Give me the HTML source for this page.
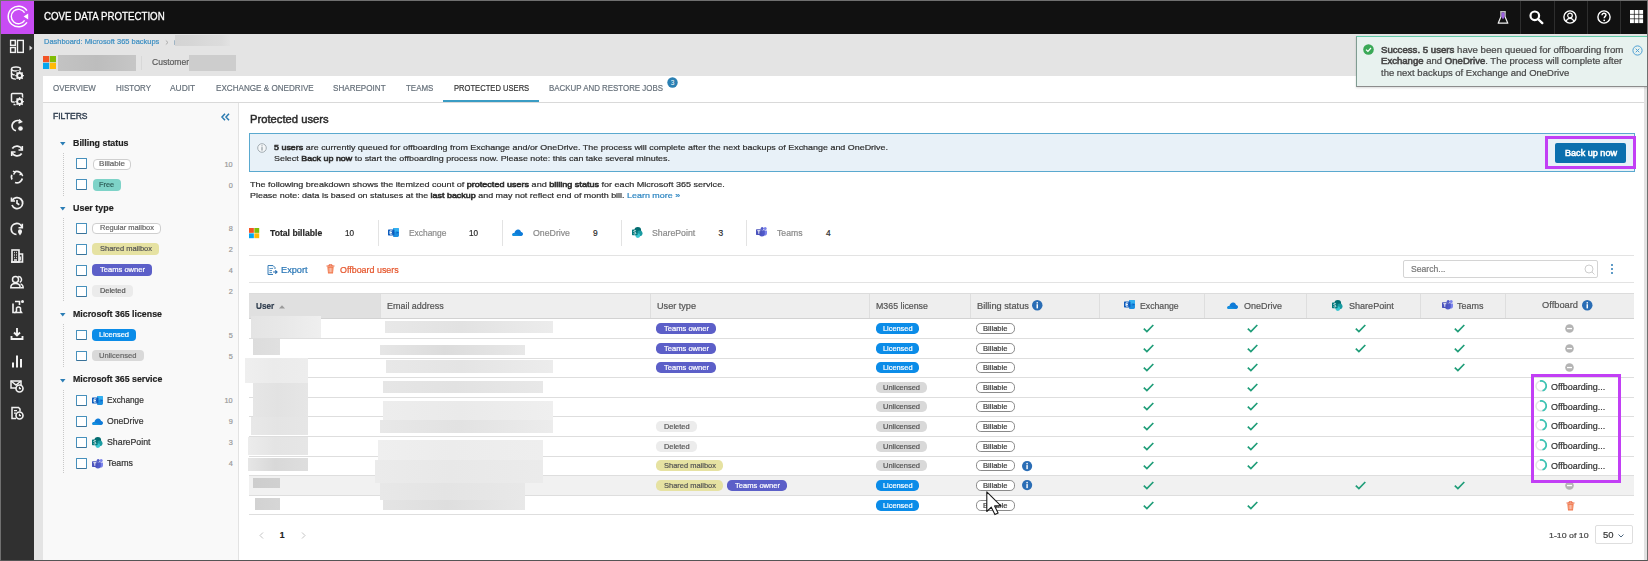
<!DOCTYPE html>
<html><head><meta charset="utf-8">
<style>
*{box-sizing:border-box;margin:0;padding:0}
html,body{width:1648px;height:561px;overflow:hidden;background:#fff}
body{position:relative;font-family:"Liberation Sans",sans-serif;color:#333}
.a{position:absolute}
.t{position:absolute;white-space:nowrap;line-height:1;-webkit-text-stroke:0.2px currentColor}
.t b{font-weight:normal;-webkit-text-stroke:0.55px currentColor}
svg{position:absolute;overflow:visible}
</style></head>
<body>
<div class="a" style="left:34px;top:34px;width:1614px;height:527px;background:#e4e4e4"></div>
<div class="a" style="left:0px;top:0px;width:1648px;height:34px;background:#111"></div>
<div class="a" style="left:1px;top:1px;width:33px;height:33px;background:#c84cf4"></div>
<div class="a" style="left:0px;top:34px;width:34px;height:527px;background:#303030"></div>
<div class="a" style="left:43px;top:76px;width:1601px;height:27px;background:#fff;border-bottom:1px solid #d9d9d9"></div>
<div class="a" style="left:43px;top:103px;width:196px;height:457px;background:#f9f9f9;border-right:1px solid #e3e3e3"></div>
<div class="a" style="left:239px;top:103px;width:1405px;height:457px;background:#fff"></div>
<div class="a" style="left:1644px;top:34px;width:3px;height:527px;background:#e2e2e2"></div>
<div class="t" style="left:43.50px;top:11px;font-size:11px;color:#fff;transform:scaleX(0.8842);transform-origin:0 0;-webkit-text-stroke:0.3px #fff;">COVE DATA PROTECTION</div>
<svg style="left:1.6px;top:1.3px" width="33" height="33" viewBox="0 0 33 33">
<path d="M24.94 9.59 A10.3 10.3 0 1 0 24.94 21.41" fill="none" stroke="#fff" stroke-width="1.5"/>
<path d="M22.6 11.68 A7.2 7.2 0 1 0 22.6 19.32" fill="none" stroke="#fff" stroke-width="1.4"/>
<path d="M21.6 15.6 L26.2 12.6 L26.2 18.4 Z" fill="#fff"/>
</svg>
<div class="a" style="left:1519.5px;top:1px;width:1px;height:33px;background:#2e2e2e"></div>
<div class="a" style="left:1553.5px;top:1px;width:1px;height:33px;background:#2e2e2e"></div>
<div class="a" style="left:1586.5px;top:1px;width:1px;height:33px;background:#2e2e2e"></div>
<div class="a" style="left:1620px;top:1px;width:1px;height:33px;background:#2e2e2e"></div>
<svg style="left:1497px;top:11px" width="12" height="14" viewBox="0 0 12 14">
<path d="M4 1.3 V5.5 L1.2 12.2 H10.8 L8 5.5 V1.3" fill="none" stroke="#f0f0f0" stroke-width="1.2" stroke-linejoin="round"/>
<path d="M3.2 0.8 H8.8" stroke="#f0f0f0" stroke-width="1.2"/>
<path d="M4.5 1.5 H7.5 V6 L6 8.5 L4.5 6Z" fill="#9b5fe0"/>
</svg>
<svg style="left:1529px;top:10px" width="15" height="14" viewBox="0 0 15 14">
<circle cx="5.8" cy="5.8" r="4.3" fill="none" stroke="#fff" stroke-width="2.2"/>
<path d="M9 9 L13.3 13.1" stroke="#fff" stroke-width="2.4" stroke-linecap="round"/>
</svg>
<svg style="left:1563px;top:10px" width="14" height="14" viewBox="0 0 14 14">
<circle cx="7" cy="7" r="6.1" fill="none" stroke="#fff" stroke-width="1.4"/>
<circle cx="7" cy="5.5" r="2.3" fill="none" stroke="#fff" stroke-width="1.2"/>
<path d="M3.2 11.6 C3.8 9 5 8.3 7 8.3 C9 8.3 10.2 9 10.8 11.6" fill="none" stroke="#fff" stroke-width="1.2"/>
</svg>
<svg style="left:1597px;top:10px" width="14" height="14" viewBox="0 0 14 14">
<circle cx="7" cy="7" r="6.1" fill="none" stroke="#fff" stroke-width="1.4"/>
<path d="M5 5.3 C5 3.8 6 3.2 7 3.2 C8.2 3.2 9 4 9 5 C9 6.3 7.2 6.5 7.2 8.2" fill="none" stroke="#fff" stroke-width="1.4"/>
<circle cx="7.2" cy="10.3" r="0.9" fill="#fff"/>
</svg>
<svg style="left:1630px;top:9.8px" width="14" height="14" viewBox="0 0 14 14"><rect x="0.0" y="0.0" width="3.9" height="3.9" fill="#fff"/><rect x="0.0" y="4.6" width="3.9" height="3.9" fill="#fff"/><rect x="0.0" y="9.2" width="3.9" height="3.9" fill="#fff"/><rect x="4.6" y="0.0" width="3.9" height="3.9" fill="#fff"/><rect x="4.6" y="4.6" width="3.9" height="3.9" fill="#fff"/><rect x="4.6" y="9.2" width="3.9" height="3.9" fill="#fff"/><rect x="9.2" y="0.0" width="3.9" height="3.9" fill="#fff"/><rect x="9.2" y="4.6" width="3.9" height="3.9" fill="#fff"/><rect x="9.2" y="9.2" width="3.9" height="3.9" fill="#fff"/></svg>
<svg style="left:10px;top:39px" width="14" height="14" viewBox="0 0 14 14"><rect x="0.6" y="1.4" width="4.7" height="4.9" fill="none" stroke="#f2f2f2" stroke-width="1.4"/><rect x="0.6" y="8.5" width="4.7" height="4.9" fill="none" stroke="#f2f2f2" stroke-width="1.4"/><rect x="7.5" y="1.4" width="5.8" height="12" fill="none" stroke="#f2f2f2" stroke-width="1.4"/></svg>
<svg style="left:10px;top:65.5px" width="14" height="14" viewBox="0 0 14 14"><ellipse cx="6" cy="3" rx="4.5" ry="2" fill="none" stroke="#f2f2f2" stroke-width="1.5"/><path d="M1.5 3 V11 C1.5 12.2 3.5 13 6 13" fill="none" stroke="#f2f2f2" stroke-width="1.5"/><path d="M1.5 7 C1.5 8.2 3.5 9 6 9" fill="none" stroke="#f2f2f2" stroke-width="1.5"/><circle cx="9.6" cy="9.6" r="5" fill="#303030"/><circle cx="9.6" cy="9.6" r="2.5" fill="none" stroke="#f2f2f2" stroke-width="2"/><path d="M12.50 9.60L13.90 9.60M11.65 11.65L12.64 12.64M9.60 12.50L9.60 13.90M7.55 11.65L6.56 12.64M6.70 9.60L5.30 9.60M7.55 7.55L6.56 6.56M9.60 6.70L9.60 5.30M11.65 7.55L12.64 6.56" stroke="#f2f2f2" stroke-width="1.4"/></svg>
<svg style="left:10px;top:92px" width="14" height="14" viewBox="0 0 14 14"><path d="M7 10 H2.5 A1 1 0 0 1 1.5 9 V2.5 A1 1 0 0 1 2.5 1.5 H11.5 A1 1 0 0 1 12.5 2.5 V6" fill="none" stroke="#f2f2f2" stroke-width="1.5"/><path d="M3.5 12.5 H6" stroke="#f2f2f2" stroke-width="1.5"/><circle cx="9.6" cy="9.6" r="5" fill="#303030"/><circle cx="9.6" cy="9.6" r="2.5" fill="none" stroke="#f2f2f2" stroke-width="2"/><path d="M12.50 9.60L13.90 9.60M11.65 11.65L12.64 12.64M9.60 12.50L9.60 13.90M7.55 11.65L6.56 12.64M6.70 9.60L5.30 9.60M7.55 7.55L6.56 6.56M9.60 6.70L9.60 5.30M11.65 7.55L12.64 6.56" stroke="#f2f2f2" stroke-width="1.4"/></svg>
<svg style="left:10px;top:118px" width="14" height="14" viewBox="0 0 14 14"><path d="M10.5 3.5 A5.5 5.5 0 0 0 2 8" fill="none" stroke="#f2f2f2" stroke-width="1.62"/><path d="M2 8 A5.5 5.5 0 0 0 6 12.8" fill="none" stroke="#f2f2f2" stroke-width="1.62"/><path d="M9 1.5 L11.5 3.8 L8.5 5" fill="none" stroke="#f2f2f2" stroke-width="1.50"/><circle cx="10.5" cy="10.5" r="2.3" fill="#f2f2f2"/></svg>
<svg style="left:10px;top:144px" width="14" height="14" viewBox="0 0 14 14"><path d="M12 5.5 A5.5 5.5 0 0 0 2.3 4.5" fill="none" stroke="#f2f2f2" stroke-width="1.75"/><path d="M2 8.5 A5.5 5.5 0 0 0 11.7 9.5" fill="none" stroke="#f2f2f2" stroke-width="1.75"/><path d="M12.3 2 V6 H8.5" fill="none" stroke="#f2f2f2" stroke-width="1.62"/><path d="M1.7 12 V8 H5.5" fill="none" stroke="#f2f2f2" stroke-width="1.62"/></svg>
<svg style="left:10px;top:170px" width="14" height="14" viewBox="0 0 14 14"><path d="M4 2.2 A5.5 5.5 0 0 1 11.8 4.5" fill="none" stroke="#f2f2f2" stroke-width="1.75"/><path d="M12.3 8.5 A5.5 5.5 0 0 1 5 12.5" fill="none" stroke="#f2f2f2" stroke-width="1.75"/><path d="M2 9.5 A5.5 5.5 0 0 1 1.8 4.8" fill="none" stroke="#f2f2f2" stroke-width="1.75"/><path d="M3 1 L5 2.5 L3.5 4.5 M12.8 6 L11.5 4 L9.5 5" fill="none" stroke="#f2f2f2" stroke-width="1.38"/></svg>
<svg style="left:10px;top:196px" width="14" height="14" viewBox="0 0 14 14"><path d="M2.3 4.5 A5.5 5.5 0 1 1 2 9" fill="none" stroke="#f2f2f2" stroke-width="1.75"/><path d="M1.5 1.5 V5 H5" fill="none" stroke="#f2f2f2" stroke-width="1.62"/><path d="M7 4 V7.3 L9.3 8.8" fill="none" stroke="#f2f2f2" stroke-width="1.62"/></svg>
<svg style="left:10px;top:222px" width="14" height="14" viewBox="0 0 14 14"><path d="M12 5.5 A5.5 5.5 0 1 0 6.5 12.5" fill="none" stroke="#f2f2f2" stroke-width="1.75"/><path d="M12.3 1.8 V5.8 H8.5" fill="none" stroke="#f2f2f2" stroke-width="1.62"/><path d="M10 13.5 C8 11 8 10 8 9.3 A2 2 0 0 1 12 9.3 C12 10 12 11 10 13.5Z" fill="#f2f2f2"/></svg>
<svg style="left:10px;top:248.5px" width="14" height="14" viewBox="0 0 14 14"><rect x="2" y="1" width="7" height="12" fill="none" stroke="#f2f2f2" stroke-width="1.62"/><path d="M9 5 H12.5 V13 H1" fill="none" stroke="#f2f2f2" stroke-width="1.62"/><path d="M4 3.5H4.8M6.2 3.5H7M4 6H4.8M6.2 6H7M4 8.5H4.8M6.2 8.5H7M4 11H7" stroke="#f2f2f2" stroke-width="1.50"/><path d="M10.2 7.5V11.5" stroke="#f2f2f2" stroke-width="1.38"/></svg>
<svg style="left:10px;top:274.5px" width="14" height="14" viewBox="0 0 14 14"><circle cx="5.5" cy="4.5" r="3" fill="none" stroke="#f2f2f2" stroke-width="1.5"/><path d="M0.8 12.8 C0.8 9.8 2.6 8.6 5.5 8.6 C8.4 8.6 10.2 9.8 10.2 12.8 Z" fill="none" stroke="#f2f2f2" stroke-width="1.5"/><path d="M8.2 1.6 A3 3 0 0 1 9.8 7.3 M10.6 8.8 C12.3 9.3 13.2 10.5 13.2 12.8 H11" fill="none" stroke="#f2f2f2" stroke-width="1.4"/></svg>
<svg style="left:10px;top:300px" width="14" height="14" viewBox="0 0 14 14"><path d="M5 1.5 H9.5 V5 M3 3.5 V12.5 H5.5" fill="none" stroke="#f2f2f2" stroke-width="1.62"/><path d="M5.5 12.5 H11.5 L10.5 11 V8 A2.5 2.5 0 0 0 6.5 8 V11 Z" fill="none" stroke="#f2f2f2" stroke-width="1.50"/><circle cx="12.5" cy="1.5" r="1.5" fill="#f2f2f2"/></svg>
<svg style="left:10px;top:327px" width="14" height="14" viewBox="0 0 14 14"><path d="M7 1 V8.5 M4 5.5 L7 8.5 L10 5.5" fill="none" stroke="#f2f2f2" stroke-width="1.88"/><path d="M1.5 9 V12 H12.5 V9" fill="none" stroke="#f2f2f2" stroke-width="1.88"/></svg>
<svg style="left:10px;top:353.5px" width="14" height="14" viewBox="0 0 14 14"><path d="M3 13.5V8.5M7 13.5V1.5M11 13.5V5" stroke="#f2f2f2" stroke-width="2"/></svg>
<svg style="left:10px;top:379px" width="14" height="14" viewBox="0 0 14 14"><rect x="1" y="2" width="10" height="7" fill="none" stroke="#f2f2f2" stroke-width="1.50"/><path d="M1 2 L6 6 L11 2" fill="none" stroke="#f2f2f2" stroke-width="1.50"/><circle cx="9.5" cy="9.5" r="3.5" fill="#303030" stroke="#f2f2f2" stroke-width="1.62"/><path d="M9.5 7.8V9.6H11" fill="none" stroke="#f2f2f2" stroke-width="1.25"/></svg>
<svg style="left:10px;top:405.5px" width="14" height="14" viewBox="0 0 14 14"><path d="M6 12.5 H2 V1.5 H8.5 L10 3 V5.5" fill="none" stroke="#f2f2f2" stroke-width="1.50"/><path d="M4 4.5H7M4 7H6" stroke="#f2f2f2" stroke-width="1.25"/><circle cx="9.5" cy="9.5" r="3.5" fill="#303030" stroke="#f2f2f2" stroke-width="1.62"/><path d="M9.5 7.8V9.6H11" fill="none" stroke="#f2f2f2" stroke-width="1.25"/></svg>
<svg style="left:28.8px;top:44.5px" width="4" height="6" viewBox="0 0 4 6"><path d="M0.5 0.5 L3.5 3 L0.5 5.5Z" fill="#ddd"/></svg>
<div class="t" style="left:43.50px;top:38px;font-size:7.7px;color:#3b8ec2;transform:scaleX(0.9706);transform-origin:0 0;">Dashboard: Microsoft 365 backups</div>
<svg style="left:164.5px;top:39.5px" width="4" height="5" viewBox="0 0 4 5"><path d="M0.8 0.5 L3 2.5 L0.8 4.5" fill="none" stroke="#a0a0a0" stroke-width="0.8"/></svg>
<div class="a" style="left:175.2px;top:35.1px;width:55px;height:10.7px;background:linear-gradient(90deg,#d4d4d4,#d6d6d6 30%,#dadada 60%,#dcdcdc 85%,#e2e2e2)"></div>
<div class="a" style="left:173.5px;top:39.5px;width:1px;height:5px;background:#9fb4c4;border-radius:1px"></div>
<svg style="left:43px;top:56px" width="13" height="13" viewBox="0 0 13 13"><rect x="0" y="0" width="6.2" height="6.2" fill="#f35325"/><rect x="6.8" y="0" width="6.2" height="6.2" fill="#81bc06"/><rect x="0" y="6.8" width="6.2" height="6.2" fill="#05a6f0"/><rect x="6.8" y="6.8" width="6.2" height="6.2" fill="#ffba08"/></svg>
<div class="a" style="left:58px;top:55px;width:78px;height:15.5px;background:linear-gradient(90deg,#c3c3c3,#bdbdbd 50%,#c6c6c6);filter:blur(0.5px)"></div>
<div class="a" style="left:141px;top:56px;width:1px;height:14px;background:#d8d8d8"></div>
<div class="t" style="left:151.50px;top:58px;font-size:8.8px;color:#5a5a5a;transform:scaleX(0.9701);transform-origin:0 0;">Customer</div>
<div class="a" style="left:188.5px;top:55px;width:47.5px;height:15.5px;background:#cdcdcd;filter:blur(0.5px)"></div>
<div class="t" style="left:53.00px;top:83px;font-size:9.4px;color:#66707a;transform:scaleX(0.8499);transform-origin:0 0;">OVERVIEW</div>
<div class="t" style="left:115.80px;top:83px;font-size:9.4px;color:#66707a;transform:scaleX(0.8466);transform-origin:0 0;">HISTORY</div>
<div class="t" style="left:170.40px;top:83px;font-size:9.4px;color:#66707a;transform:scaleX(0.8960);transform-origin:0 0;">AUDIT</div>
<div class="t" style="left:216.00px;top:83px;font-size:9.4px;color:#66707a;transform:scaleX(0.8642);transform-origin:0 0;">EXCHANGE &amp; ONEDRIVE</div>
<div class="t" style="left:333.40px;top:83px;font-size:9.4px;color:#66707a;transform:scaleX(0.8630);transform-origin:0 0;">SHAREPOINT</div>
<div class="t" style="left:406.00px;top:83px;font-size:9.4px;color:#66707a;transform:scaleX(0.8453);transform-origin:0 0;">TEAMS</div>
<div class="t" style="left:453.90px;top:83px;font-size:9.4px;color:#333;transform:scaleX(0.8109);transform-origin:0 0;">PROTECTED USERS</div>
<div class="t" style="left:549.30px;top:83px;font-size:9.4px;color:#66707a;transform:scaleX(0.8438);transform-origin:0 0;">BACKUP AND RESTORE JOBS</div>
<div class="a" style="left:443px;top:100px;width:96px;height:2px;background:#3a9cc4"></div>
<svg style="left:666.5px;top:76.5px" width="11" height="11" viewBox="0 0 11 11"><circle cx="5.5" cy="5.5" r="5.2" fill="#2b80b3"/><text x="5.5" y="7.8" font-size="6.5" fill="#fff" text-anchor="middle" font-family="Liberation Sans">3</text></svg>
<div class="t" style="left:53.30px;top:112px;font-size:9px;color:#2f3d4e;transform:scaleX(0.9493);transform-origin:0 0;-webkit-text-stroke:0.4px #2f3d4e;">FILTERS</div>
<svg style="left:220.5px;top:112.5px" width="9" height="8" viewBox="0 0 9 8"><path d="M4 0.8 L1 4 L4 7.2 M8 0.8 L5 4 L8 7.2" fill="none" stroke="#2a7ab0" stroke-width="1.5"/></svg>
<svg style="left:59.8px;top:142px" width="6" height="4" viewBox="0 0 6 4"><path d="M0 0 H5.5 L2.75 3.5Z" fill="#2b7db5"/></svg>
<div class="t" style="left:72.50px;top:138px;font-size:9.6px;color:#222;font-weight:bold;transform:scaleX(0.9214);transform-origin:0 0;">Billing status</div>
<div class="a" style="left:62.5px;top:153px;width:1px;height:44px;background-image:linear-gradient(#c8c8c8 50%,transparent 50%);background-size:1px 2px"></div>
<div class="a" style="left:76px;top:158.2px;width:10.9px;height:10.6px;border:1.2px solid #4690bc;border-bottom-color:#3a7298;background:#fff;border-radius:1px"></div>
<div class="a" style="left:92.5px;top:158.5px;width:38px;height:11px;background:#fff;border-radius:4px;border:1px solid #cfcfcf;"></div>
<div class="t" style="left:98.50px;top:160px;font-size:7.3px;color:#666;transform:scaleX(1.1049);transform-origin:0 0;">Billable</div>
<div class="t" style="left:224.57px;top:161px;font-size:7.3px;color:#9a9a9a;">10</div>
<div class="a" style="left:76px;top:179.4px;width:10.9px;height:10.6px;border:1.2px solid #4690bc;border-bottom-color:#3a7298;background:#fff;border-radius:1px"></div>
<div class="a" style="left:92.5px;top:179px;width:28.5px;height:11.5px;background:#7ed3c8;border-radius:4px;"></div>
<div class="t" style="left:99.25px;top:181px;font-size:7.3px;color:#2d5d58;transform:scaleX(0.9990);transform-origin:0 0;">Free</div>
<div class="t" style="left:228.64px;top:182px;font-size:7.3px;color:#9a9a9a;">0</div>
<svg style="left:59.8px;top:206.8px" width="6" height="4" viewBox="0 0 6 4"><path d="M0 0 H5.5 L2.75 3.5Z" fill="#2b7db5"/></svg>
<div class="t" style="left:72.50px;top:203px;font-size:9.6px;color:#222;font-weight:bold;transform:scaleX(0.9283);transform-origin:0 0;">User type</div>
<div class="a" style="left:62.5px;top:218px;width:1px;height:84px;background-image:linear-gradient(#c8c8c8 50%,transparent 50%);background-size:1px 2px"></div>
<div class="a" style="left:76px;top:223px;width:10.9px;height:10.6px;border:1.2px solid #4690bc;border-bottom-color:#3a7298;background:#fff;border-radius:1px"></div>
<div class="a" style="left:92.2px;top:222.5px;width:68.6px;height:11.7px;background:#fff;border-radius:4px;border:1px solid #cfcfcf;"></div>
<div class="t" style="left:99.50px;top:224px;font-size:7.3px;color:#666;transform:scaleX(1.0240);transform-origin:0 0;">Regular mailbox</div>
<div class="t" style="left:228.64px;top:225px;font-size:7.3px;color:#9a9a9a;">8</div>
<div class="a" style="left:76px;top:244px;width:10.9px;height:10.6px;border:1.2px solid #4690bc;border-bottom-color:#3a7298;background:#fff;border-radius:1px"></div>
<div class="a" style="left:92.2px;top:243px;width:66.6px;height:11.8px;background:#e6e2a2;border-radius:4px;"></div>
<div class="t" style="left:99.50px;top:245px;font-size:7.3px;color:#555;transform:scaleX(1.0256);transform-origin:0 0;">Shared mailbox</div>
<div class="t" style="left:228.64px;top:246px;font-size:7.3px;color:#9a9a9a;">2</div>
<div class="a" style="left:76px;top:265px;width:10.9px;height:10.6px;border:1.2px solid #4690bc;border-bottom-color:#3a7298;background:#fff;border-radius:1px"></div>
<div class="a" style="left:92.2px;top:264px;width:59.8px;height:11.8px;background:#5c5fc8;border-radius:4px;"></div>
<div class="t" style="left:99.60px;top:266px;font-size:7.3px;color:#fff;transform:scaleX(1.0367);transform-origin:0 0;">Teams owner</div>
<div class="t" style="left:228.64px;top:267px;font-size:7.3px;color:#9a9a9a;">4</div>
<div class="a" style="left:76px;top:286px;width:10.9px;height:10.6px;border:1.2px solid #4690bc;border-bottom-color:#3a7298;background:#fff;border-radius:1px"></div>
<div class="a" style="left:92.2px;top:285.2px;width:41px;height:11.4px;background:#ebebeb;border-radius:4px;"></div>
<div class="t" style="left:99.95px;top:287px;font-size:7.3px;color:#555;transform:scaleX(1.0137);transform-origin:0 0;">Deleted</div>
<div class="t" style="left:228.64px;top:288px;font-size:7.3px;color:#9a9a9a;">2</div>
<svg style="left:59.8px;top:313px" width="6" height="4" viewBox="0 0 6 4"><path d="M0 0 H5.5 L2.75 3.5Z" fill="#2b7db5"/></svg>
<div class="t" style="left:72.50px;top:309px;font-size:9.6px;color:#222;font-weight:bold;transform:scaleX(0.9161);transform-origin:0 0;">Microsoft 365 license</div>
<div class="a" style="left:62.5px;top:324px;width:1px;height:43px;background-image:linear-gradient(#c8c8c8 50%,transparent 50%);background-size:1px 2px"></div>
<div class="a" style="left:76px;top:329.5px;width:10.9px;height:10.6px;border:1.2px solid #4690bc;border-bottom-color:#3a7298;background:#fff;border-radius:1px"></div>
<div class="a" style="left:91.8px;top:329.4px;width:44.5px;height:11.4px;background:#0b8ce8;border-radius:4px;"></div>
<div class="t" style="left:99.05px;top:331px;font-size:7.3px;color:#fff;transform:scaleX(1.0267);transform-origin:0 0;">Licensed</div>
<div class="t" style="left:228.64px;top:332px;font-size:7.3px;color:#9a9a9a;">5</div>
<div class="a" style="left:76px;top:350.5px;width:10.9px;height:10.6px;border:1.2px solid #4690bc;border-bottom-color:#3a7298;background:#fff;border-radius:1px"></div>
<div class="a" style="left:91.8px;top:350px;width:52.2px;height:11.2px;background:#d9d9d9;border-radius:4px;"></div>
<div class="t" style="left:99.15px;top:352px;font-size:7.3px;color:#666;transform:scaleX(1.0385);transform-origin:0 0;">Unlicensed</div>
<div class="t" style="left:228.64px;top:353px;font-size:7.3px;color:#9a9a9a;">5</div>
<svg style="left:59.8px;top:379px" width="6" height="4" viewBox="0 0 6 4"><path d="M0 0 H5.5 L2.75 3.5Z" fill="#2b7db5"/></svg>
<div class="t" style="left:72.50px;top:374px;font-size:9.6px;color:#222;font-weight:bold;transform:scaleX(0.9150);transform-origin:0 0;">Microsoft 365 service</div>
<div class="a" style="left:62.5px;top:390px;width:1px;height:83px;background-image:linear-gradient(#c8c8c8 50%,transparent 50%);background-size:1px 2px"></div>
<div class="a" style="left:76px;top:395px;width:10.9px;height:10.6px;border:1.2px solid #4690bc;border-bottom-color:#3a7298;background:#fff;border-radius:1px"></div>
<svg style="left:91.8px;top:396px" width="11" height="9" viewBox="0 0 11 9"><path d="M5.2 0 H9.6 A1.4 1.4 0 0 1 11 1.4 V7.6 A1.4 1.4 0 0 1 9.6 9 H5.2 Z" fill="#1c8fe0"/><path d="M5.2 0 H9.6 A1.4 1.4 0 0 1 11 1.4 V3.8 H5.2Z" fill="#32b0f0"/><path d="M8.5 3.2 L11 4.5 L8.5 5.8Z" fill="#0a64c8"/><rect x="0" y="1.6" width="6.4" height="5.8" rx="0.6" fill="#0b5bbd"/><path d="M2 2.9 H4.3 M2 2.9 V6.1 H4.3 M2 4.5 H4" fill="none" stroke="#fff" stroke-width="0.9"/></svg>
<div class="t" style="left:106.90px;top:396px;font-size:8.6px;color:#333;transform:scaleX(0.9625);transform-origin:0 0;">Exchange</div>
<div class="t" style="left:224.57px;top:397px;font-size:7.3px;color:#9a9a9a;">10</div>
<div class="a" style="left:76px;top:416px;width:10.9px;height:10.6px;border:1.2px solid #4690bc;border-bottom-color:#3a7298;background:#fff;border-radius:1px"></div>
<svg style="left:91.8px;top:418px" width="11" height="7" viewBox="0 0 11 7"><path d="M2.3 7 C0.6 7 0 5.9 0.4 4.9 C0.8 4 1.6 3.8 2.4 3.9 C2.9 1.6 4.6 0.3 6.3 0.5 C7.8 0.7 8.8 1.7 9.1 3.1 C10.4 3.2 11 4.1 11 5.1 C11 6.2 10.3 7 9.2 7 Z" fill="#0f7bd8"/><path d="M2.3 7 C0.6 7 0 5.9 0.4 4.9 C1 4.2 2 4.2 3 4.6 L9.2 7Z" fill="#1490df"/></svg>
<div class="t" style="left:106.90px;top:417px;font-size:8.6px;color:#333;transform:scaleX(1.0056);transform-origin:0 0;">OneDrive</div>
<div class="t" style="left:228.64px;top:418px;font-size:7.3px;color:#9a9a9a;">9</div>
<div class="a" style="left:76px;top:437px;width:10.9px;height:10.6px;border:1.2px solid #4690bc;border-bottom-color:#3a7298;background:#fff;border-radius:1px"></div>
<svg style="left:91.8px;top:437px" width="10.5" height="11" viewBox="0 0 10.5 11"><circle cx="5.8" cy="3.3" r="3.3" fill="#036c70"/><circle cx="7.6" cy="6.3" r="2.9" fill="#1a9ba1"/><circle cx="5.8" cy="8.6" r="2.4" fill="#37c6d0"/><rect x="0" y="2.6" width="5.6" height="5.6" rx="0.6" fill="#03787c"/><path d="M4 3.9 C3 3.3 1.6 3.6 1.8 4.5 C2 5.3 3.9 5.2 3.9 6.2 C3.9 7.1 2.4 7.2 1.6 6.7" fill="none" stroke="#fff" stroke-width="0.8"/></svg>
<div class="t" style="left:106.90px;top:438px;font-size:8.6px;color:#333;transform:scaleX(1.0228);transform-origin:0 0;">SharePoint</div>
<div class="t" style="left:228.64px;top:439px;font-size:7.3px;color:#9a9a9a;">3</div>
<div class="a" style="left:76px;top:458px;width:10.9px;height:10.6px;border:1.2px solid #4690bc;border-bottom-color:#3a7298;background:#fff;border-radius:1px"></div>
<svg style="left:91.8px;top:458.8px" width="11" height="9.5" viewBox="0 0 11 9.5"><circle cx="9.2" cy="1.6" r="1.5" fill="#7b83eb"/><path d="M7.3 3.6 H10.6 A0.4 0.4 0 0 1 11 4 V6.6 A2.1 2.1 0 0 1 6.8 6.6Z" fill="#7b83eb"/><circle cx="6.2" cy="1.5" r="1.5" fill="#5059c9"/><path d="M3.2 3.3 H8.4 A0.4 0.4 0 0 1 8.8 3.7 V6.6 A2.9 2.9 0 0 1 3 6.6 V3.5Z" fill="#5059c9"/><rect x="0" y="2.3" width="5.6" height="5.6" rx="0.6" fill="#4b53bc"/><path d="M1.3 3.7 H4.3 M2.8 3.7 V6.8" stroke="#fff" stroke-width="0.9"/></svg>
<div class="t" style="left:106.90px;top:459px;font-size:8.6px;color:#333;transform:scaleX(1.0272);transform-origin:0 0;">Teams</div>
<div class="t" style="left:228.64px;top:460px;font-size:7.3px;color:#9a9a9a;">4</div>
<div class="t" style="left:249.60px;top:114px;font-size:11.2px;color:#2b2b2b;transform:scaleX(1.0031);transform-origin:0 0;-webkit-text-stroke:0.45px #2b2b2b;">Protected users</div>
<div class="a" style="left:249px;top:133px;width:1385.5px;height:38.5px;background:#e8f1f8;border:1px solid #5aa9cf"></div>
<svg style="left:257px;top:143px" width="10" height="10" viewBox="0 0 10 10"><circle cx="5" cy="5" r="4.3" fill="#f4f7f9" stroke="#9aa4aa" stroke-width="0.9"/><rect x="4.45" y="4.1" width="1.1" height="3.5" fill="#8a949a"/><circle cx="5" cy="2.8" r="0.65" fill="#8a949a"/></svg>
<div class="t" style="left:273.80px;top:144px;font-size:7.8px;color:#2e2e2e;transform:scaleX(1.1449);transform-origin:0 0;"><b>5 users</b> are currently queued for offboarding from Exchange and/or OneDrive. The process will complete after the next backups of Exchange and OneDrive.</div>
<div class="t" style="left:273.80px;top:155px;font-size:7.8px;color:#2e2e2e;transform:scaleX(1.1425);transform-origin:0 0;">Select <b>Back up now</b> to start the offboarding process now. Please note: this can take several minutes.</div>
<div class="a" style="left:1555px;top:143px;width:71.3px;height:19.7px;background:#0b6fae;border-radius:2px"></div>
<div class="t" style="left:1564.80px;top:149px;font-size:8.6px;color:#fff;transform:scaleX(1.0565);transform-origin:0 0;-webkit-text-stroke:0.5px #fff;">Back up now</div>
<div class="t" style="left:249.60px;top:181px;font-size:7.8px;color:#2e2e2e;transform:scaleX(1.1602);transform-origin:0 0;">The following breakdown shows the itemized count of <b>protected users</b> and <b>billing status</b> for each Microsoft 365 service.</div>
<div class="t" style="left:249.60px;top:192px;font-size:7.8px;color:#2e2e2e;transform:scaleX(1.1445);transform-origin:0 0;">Please note: data is based on statuses at the <b>last backup</b> and may not reflect end of month bill. <span style="color:#2d86c2">Learn more »</span></div>
<svg style="left:249px;top:227.7px" width="10.2" height="10.2" viewBox="0 0 13 13"><rect x="0" y="0" width="6.2" height="6.2" fill="#f35325"/><rect x="6.8" y="0" width="6.2" height="6.2" fill="#81bc06"/><rect x="0" y="6.8" width="6.2" height="6.2" fill="#05a6f0"/><rect x="6.8" y="6.8" width="6.2" height="6.2" fill="#ffba08"/></svg>
<div class="t" style="left:269.60px;top:229px;font-size:8.4px;color:#2b2b2b;font-weight:bold;transform:scaleX(1.0321);transform-origin:0 0;">Total billable</div>
<div class="t" style="left:345.10px;top:229px;font-size:8.4px;color:#2b2b2b;transform:scaleX(0.9755);transform-origin:0 0;">10</div>
<div class="a" style="left:377.5px;top:219.5px;width:1px;height:26.5px;background:#e3e3e3"></div>
<div class="a" style="left:502.3px;top:219.5px;width:1px;height:26.5px;background:#e3e3e3"></div>
<div class="a" style="left:620.6px;top:219.5px;width:1px;height:26.5px;background:#e3e3e3"></div>
<div class="a" style="left:746.3px;top:219.5px;width:1px;height:26.5px;background:#e3e3e3"></div>
<svg style="left:388px;top:228px" width="11" height="9" viewBox="0 0 11 9"><path d="M5.2 0 H9.6 A1.4 1.4 0 0 1 11 1.4 V7.6 A1.4 1.4 0 0 1 9.6 9 H5.2 Z" fill="#1c8fe0"/><path d="M5.2 0 H9.6 A1.4 1.4 0 0 1 11 1.4 V3.8 H5.2Z" fill="#32b0f0"/><path d="M8.5 3.2 L11 4.5 L8.5 5.8Z" fill="#0a64c8"/><rect x="0" y="1.6" width="6.4" height="5.8" rx="0.6" fill="#0b5bbd"/><path d="M2 2.9 H4.3 M2 2.9 V6.1 H4.3 M2 4.5 H4" fill="none" stroke="#fff" stroke-width="0.9"/></svg>
<div class="t" style="left:408.80px;top:229px;font-size:8.4px;color:#8a8a8a;transform:scaleX(1.0040);transform-origin:0 0;">Exchange</div>
<div class="t" style="left:468.90px;top:229px;font-size:8.4px;color:#2b2b2b;transform:scaleX(0.9755);transform-origin:0 0;">10</div>
<svg style="left:512px;top:229px" width="11" height="7" viewBox="0 0 11 7"><path d="M2.3 7 C0.6 7 0 5.9 0.4 4.9 C0.8 4 1.6 3.8 2.4 3.9 C2.9 1.6 4.6 0.3 6.3 0.5 C7.8 0.7 8.8 1.7 9.1 3.1 C10.4 3.2 11 4.1 11 5.1 C11 6.2 10.3 7 9.2 7 Z" fill="#0f7bd8"/><path d="M2.3 7 C0.6 7 0 5.9 0.4 4.9 C1 4.2 2 4.2 3 4.6 L9.2 7Z" fill="#1490df"/></svg>
<div class="t" style="left:533.00px;top:229px;font-size:8.4px;color:#8a8a8a;transform:scaleX(1.0459);transform-origin:0 0;">OneDrive</div>
<div class="t" style="left:593.00px;top:229px;font-size:8.4px;color:#2b2b2b;">9</div>
<svg style="left:631.5px;top:226.8px" width="10.5" height="11" viewBox="0 0 10.5 11"><circle cx="5.8" cy="3.3" r="3.3" fill="#036c70"/><circle cx="7.6" cy="6.3" r="2.9" fill="#1a9ba1"/><circle cx="5.8" cy="8.6" r="2.4" fill="#37c6d0"/><rect x="0" y="2.6" width="5.6" height="5.6" rx="0.6" fill="#03787c"/><path d="M4 3.9 C3 3.3 1.6 3.6 1.8 4.5 C2 5.3 3.9 5.2 3.9 6.2 C3.9 7.1 2.4 7.2 1.6 6.7" fill="none" stroke="#fff" stroke-width="0.8"/></svg>
<div class="t" style="left:651.80px;top:229px;font-size:8.4px;color:#8a8a8a;transform:scaleX(1.0425);transform-origin:0 0;">SharePoint</div>
<div class="t" style="left:718.50px;top:229px;font-size:8.4px;color:#2b2b2b;">3</div>
<svg style="left:756px;top:227.3px" width="11" height="9.5" viewBox="0 0 11 9.5"><circle cx="9.2" cy="1.6" r="1.5" fill="#7b83eb"/><path d="M7.3 3.6 H10.6 A0.4 0.4 0 0 1 11 4 V6.6 A2.1 2.1 0 0 1 6.8 6.6Z" fill="#7b83eb"/><circle cx="6.2" cy="1.5" r="1.5" fill="#5059c9"/><path d="M3.2 3.3 H8.4 A0.4 0.4 0 0 1 8.8 3.7 V6.6 A2.9 2.9 0 0 1 3 6.6 V3.5Z" fill="#5059c9"/><rect x="0" y="2.3" width="5.6" height="5.6" rx="0.6" fill="#4b53bc"/><path d="M1.3 3.7 H4.3 M2.8 3.7 V6.8" stroke="#fff" stroke-width="0.9"/></svg>
<div class="t" style="left:777.10px;top:229px;font-size:8.4px;color:#8a8a8a;transform:scaleX(1.0336);transform-origin:0 0;">Teams</div>
<div class="t" style="left:826.00px;top:229px;font-size:8.4px;color:#2b2b2b;">4</div>
<div class="a" style="left:249px;top:255px;width:1385px;height:1px;background:#e3e3e3"></div>
<div class="a" style="left:249px;top:282px;width:1385px;height:1px;background:#e3e3e3"></div>
<svg style="left:267px;top:264.5px" width="11" height="10" viewBox="0 0 11 10"><path d="M1 0.5 H6 L8 2.5 V4 M1 0.5 V9.5 H6" fill="#e8f1f8" stroke="#3a7fb8" stroke-width="1"/><path d="M2.5 3.5H6M2.5 5.5H5M2.5 7.5H5" stroke="#3a7fb8" stroke-width="0.8"/><path d="M6 7 H10 M8.3 5.3 L10 7 L8.3 8.7" fill="none" stroke="#2a6fb0" stroke-width="1.2"/></svg>
<div class="t" style="left:281.40px;top:266px;font-size:8.4px;color:#2a77b6;transform:scaleX(1.0983);transform-origin:0 0;">Export</div>
<svg style="left:326px;top:264px" width="9" height="10" viewBox="0 0 9 10"><path d="M0.5 2 H8.5 M3 2 V0.8 H6 V2" fill="none" stroke="#e8562b" stroke-width="0.9"/><path d="M1.3 2.5 L2 9.5 H7 L7.7 2.5Z" fill="#f27a4e"/><path d="M3.2 3.8V8.3M4.5 3.8V8.3M5.8 3.8V8.3" stroke="#fff" stroke-width="0.5"/></svg>
<div class="t" style="left:339.80px;top:266px;font-size:8.4px;color:#e5552b;transform:scaleX(1.0624);transform-origin:0 0;">Offboard users</div>
<div class="a" style="left:1402.6px;top:260px;width:195.4px;height:18px;background:#fff;border:1px solid #d4d4d4;border-radius:2px"></div>
<div class="t" style="left:1411.20px;top:266px;font-size:8.2px;color:#777;transform:scaleX(1.0524);transform-origin:0 0;">Search...</div>
<svg style="left:1583.5px;top:263.5px" width="11" height="11" viewBox="0 0 11 11"><circle cx="5" cy="5" r="4" fill="none" stroke="#c8c8c8" stroke-width="0.9"/><path d="M8 8 L10.5 10.5" stroke="#c8c8c8" stroke-width="0.9"/></svg>
<div class="a" style="left:1610.5px;top:264.2px;width:2px;height:2px;background:#2a7ab5;border-radius:1px"></div>
<div class="a" style="left:1610.5px;top:268.2px;width:2px;height:2px;background:#2a7ab5;border-radius:1px"></div>
<div class="a" style="left:1610.5px;top:272.2px;width:2px;height:2px;background:#2a7ab5;border-radius:1px"></div>
<div class="a" style="left:249px;top:293px;width:1385px;height:26px;background:#eeeeee;border-top:1px solid #dcdcdc;border-bottom:1px solid #d2d2d2"></div>
<div class="a" style="left:249px;top:294px;width:131.5px;height:24px;background:#e0e0e0"></div>
<div class="a" style="left:380px;top:294px;width:1px;height:24px;background:#dedede"></div>
<div class="a" style="left:650px;top:294px;width:1px;height:24px;background:#dedede"></div>
<div class="a" style="left:869px;top:294px;width:1px;height:24px;background:#dedede"></div>
<div class="a" style="left:970px;top:294px;width:1px;height:24px;background:#dedede"></div>
<div class="a" style="left:1099px;top:294px;width:1px;height:24px;background:#dedede"></div>
<div class="a" style="left:1203.5px;top:294px;width:1px;height:24px;background:#dedede"></div>
<div class="a" style="left:1306px;top:294px;width:1px;height:24px;background:#dedede"></div>
<div class="a" style="left:1419.5px;top:294px;width:1px;height:24px;background:#dedede"></div>
<div class="a" style="left:1505px;top:294px;width:1px;height:24px;background:#dedede"></div>
<div class="t" style="left:255.80px;top:302px;font-size:8.8px;color:#2f3d4e;font-weight:bold;transform:scaleX(0.9304);transform-origin:0 0;">User</div>
<svg style="left:279.4px;top:304.5px" width="6" height="4" viewBox="0 0 6 4"><path d="M0 3.5 L3 0.3 L6 3.5Z" fill="#9a9a9a"/></svg>
<div class="t" style="left:386.50px;top:302px;font-size:8.8px;color:#555;transform:scaleX(1.0170);transform-origin:0 0;">Email address</div>
<div class="t" style="left:656.70px;top:302px;font-size:8.8px;color:#555;transform:scaleX(1.0357);transform-origin:0 0;">User type</div>
<div class="t" style="left:876.40px;top:302px;font-size:8.8px;color:#555;transform:scaleX(1.0011);transform-origin:0 0;">M365 license</div>
<div class="t" style="left:976.90px;top:302px;font-size:8.8px;color:#555;transform:scaleX(1.0508);transform-origin:0 0;">Billing status</div>
<svg style="left:1032px;top:300px" width="10.5" height="10.5" viewBox="0 0 10 10"><circle cx="5" cy="5" r="5" fill="#2a6db5"/><rect x="4.3" y="4" width="1.4" height="4" fill="#fff"/><circle cx="5" cy="2.6" r="0.8" fill="#fff"/></svg>
<svg style="left:1124px;top:300.3px" width="11" height="9" viewBox="0 0 11 9"><path d="M5.2 0 H9.6 A1.4 1.4 0 0 1 11 1.4 V7.6 A1.4 1.4 0 0 1 9.6 9 H5.2 Z" fill="#1c8fe0"/><path d="M5.2 0 H9.6 A1.4 1.4 0 0 1 11 1.4 V3.8 H5.2Z" fill="#32b0f0"/><path d="M8.5 3.2 L11 4.5 L8.5 5.8Z" fill="#0a64c8"/><rect x="0" y="1.6" width="6.4" height="5.8" rx="0.6" fill="#0b5bbd"/><path d="M2 2.9 H4.3 M2 2.9 V6.1 H4.3 M2 4.5 H4" fill="none" stroke="#fff" stroke-width="0.9"/></svg>
<div class="t" style="left:1140.00px;top:302px;font-size:8.8px;color:#555;transform:scaleX(0.9887);transform-origin:0 0;">Exchange</div>
<svg style="left:1227.2px;top:301.5px" width="11" height="7" viewBox="0 0 11 7"><path d="M2.3 7 C0.6 7 0 5.9 0.4 4.9 C0.8 4 1.6 3.8 2.4 3.9 C2.9 1.6 4.6 0.3 6.3 0.5 C7.8 0.7 8.8 1.7 9.1 3.1 C10.4 3.2 11 4.1 11 5.1 C11 6.2 10.3 7 9.2 7 Z" fill="#0f7bd8"/><path d="M2.3 7 C0.6 7 0 5.9 0.4 4.9 C1 4.2 2 4.2 3 4.6 L9.2 7Z" fill="#1490df"/></svg>
<div class="t" style="left:1244.00px;top:302px;font-size:8.8px;color:#555;transform:scaleX(1.0227);transform-origin:0 0;">OneDrive</div>
<svg style="left:1332.2px;top:299.6px" width="10.5" height="11" viewBox="0 0 10.5 11"><circle cx="5.8" cy="3.3" r="3.3" fill="#036c70"/><circle cx="7.6" cy="6.3" r="2.9" fill="#1a9ba1"/><circle cx="5.8" cy="8.6" r="2.4" fill="#37c6d0"/><rect x="0" y="2.6" width="5.6" height="5.6" rx="0.6" fill="#03787c"/><path d="M4 3.9 C3 3.3 1.6 3.6 1.8 4.5 C2 5.3 3.9 5.2 3.9 6.2 C3.9 7.1 2.4 7.2 1.6 6.7" fill="none" stroke="#fff" stroke-width="0.8"/></svg>
<div class="t" style="left:1349.00px;top:302px;font-size:8.8px;color:#555;transform:scaleX(1.0291);transform-origin:0 0;">SharePoint</div>
<svg style="left:1441.6px;top:299.8px" width="11" height="9.5" viewBox="0 0 11 9.5"><circle cx="9.2" cy="1.6" r="1.5" fill="#7b83eb"/><path d="M7.3 3.6 H10.6 A0.4 0.4 0 0 1 11 4 V6.6 A2.1 2.1 0 0 1 6.8 6.6Z" fill="#7b83eb"/><circle cx="6.2" cy="1.5" r="1.5" fill="#5059c9"/><path d="M3.2 3.3 H8.4 A0.4 0.4 0 0 1 8.8 3.7 V6.6 A2.9 2.9 0 0 1 3 6.6 V3.5Z" fill="#5059c9"/><rect x="0" y="2.3" width="5.6" height="5.6" rx="0.6" fill="#4b53bc"/><path d="M1.3 3.7 H4.3 M2.8 3.7 V6.8" stroke="#fff" stroke-width="0.9"/></svg>
<div class="t" style="left:1457.40px;top:302px;font-size:8.8px;color:#555;transform:scaleX(1.0184);transform-origin:0 0;">Teams</div>
<div class="t" style="left:1542.00px;top:301px;font-size:8.8px;color:#555;transform:scaleX(1.0564);transform-origin:0 0;">Offboard</div>
<svg style="left:1582px;top:299.7px" width="10.5" height="10.5" viewBox="0 0 10 10"><circle cx="5" cy="5" r="5" fill="#2a6db5"/><rect x="4.3" y="4" width="1.4" height="4" fill="#fff"/><circle cx="5" cy="2.6" r="0.8" fill="#fff"/></svg>
<div class="a" style="left:249px;top:475.5px;width:1385px;height:19.5px;background:#f1f1f1"></div>
<div class="a" style="left:249px;top:338.0px;width:1385px;height:1px;background:#dedede"></div>
<div class="a" style="left:249px;top:357.5px;width:1385px;height:1px;background:#dedede"></div>
<div class="a" style="left:249px;top:377.0px;width:1385px;height:1px;background:#dedede"></div>
<div class="a" style="left:249px;top:396.5px;width:1385px;height:1px;background:#dedede"></div>
<div class="a" style="left:249px;top:416.0px;width:1385px;height:1px;background:#dedede"></div>
<div class="a" style="left:249px;top:435.5px;width:1385px;height:1px;background:#dedede"></div>
<div class="a" style="left:249px;top:455.5px;width:1385px;height:1px;background:#dedede"></div>
<div class="a" style="left:249px;top:475.0px;width:1385px;height:1px;background:#dedede"></div>
<div class="a" style="left:249px;top:494.5px;width:1385px;height:1px;background:#dedede"></div>
<div class="a" style="left:249px;top:514.0px;width:1385px;height:1px;background:#dedede"></div>
<div class="a" style="left:251.0px;top:316.0px;width:70.0px;height:22.0px;background:linear-gradient(90deg,#e4e4e4,#e8e8e8 45%,#efefef);filter:blur(0.3px)"></div>
<div class="a" style="left:252.5px;top:338.5px;width:27.0px;height:16.5px;background:linear-gradient(90deg,#dcdcdc,#e0e0e0);filter:blur(0.3px)"></div>
<div class="a" style="left:245.0px;top:358.0px;width:63.0px;height:25.0px;background:linear-gradient(90deg,#efefef,#ebebeb 45%,#ededed);filter:blur(0.3px)"></div>
<div class="a" style="left:252.5px;top:383.0px;width:55.5px;height:33.5px;background:linear-gradient(90deg,#e6e6e6,#e2e2e2 45%,#e6e6e6);filter:blur(0.3px)"></div>
<div class="a" style="left:251.0px;top:416.5px;width:57.0px;height:18.0px;background:linear-gradient(90deg,#e8e8e8,#e4e4e4 45%,#e6e6e6);filter:blur(0.3px)"></div>
<div class="a" style="left:248.0px;top:436.5px;width:60.0px;height:18.5px;background:linear-gradient(90deg,#ececec,#e4e4e4 45%,#e6e6e6);filter:blur(0.3px)"></div>
<div class="a" style="left:248.0px;top:458.0px;width:60.0px;height:13.0px;background:linear-gradient(90deg,#e6e6e6,#d8d8d8 45%,#dedede);filter:blur(0.3px)"></div>
<div class="a" style="left:252.5px;top:478.0px;width:27.0px;height:9.5px;background:linear-gradient(90deg,#cdcdcd,#d0d0d0);filter:blur(0.3px)"></div>
<div class="a" style="left:255.0px;top:498.0px;width:25.0px;height:11.5px;background:linear-gradient(90deg,#d2d2d2,#d6d6d6);filter:blur(0.3px)"></div>
<div class="a" style="left:385.0px;top:321.0px;width:168.0px;height:12.0px;background:linear-gradient(90deg,#e8e8e8,#e2e2e2 45%,#ececec);filter:blur(0.3px)"></div>
<div class="a" style="left:380.0px;top:345.0px;width:145.0px;height:9.5px;background:linear-gradient(90deg,#e6e6e6,#dcdcdc 45%,#e8e8e8);filter:blur(0.3px)"></div>
<div class="a" style="left:385.5px;top:360.0px;width:167.0px;height:12.5px;background:linear-gradient(90deg,#e8e8e8,#e4e4e4 45%,#ececec);filter:blur(0.3px)"></div>
<div class="a" style="left:383.0px;top:381.0px;width:160.0px;height:12.0px;background:linear-gradient(90deg,#e6e6e6,#e2e2e2 45%,#e8e8e8);filter:blur(0.3px)"></div>
<div class="a" style="left:383.0px;top:401.0px;width:170.0px;height:19.0px;background:linear-gradient(90deg,#ededed,#eaeaea 45%,#efefef);filter:blur(0.3px)"></div>
<div class="a" style="left:380.0px;top:420.0px;width:173.0px;height:13.0px;background:linear-gradient(90deg,#e8e8e8,#e2e2e2 45%,#ececec);filter:blur(0.3px)"></div>
<div class="a" style="left:378.0px;top:440.0px;width:165.0px;height:20.0px;background:linear-gradient(90deg,#efefef,#ececec 45%,#eeeeee);filter:blur(0.3px)"></div>
<div class="a" style="left:375.0px;top:460.0px;width:168.0px;height:23.0px;background:linear-gradient(90deg,#ebebeb,#e8e8e8 45%,#ebebeb);filter:blur(0.3px)"></div>
<div class="a" style="left:380.0px;top:483.0px;width:144.5px;height:16.5px;background:linear-gradient(90deg,#e8e8e8,#e4e4e4 45%,#e8e8e8);filter:blur(0.3px)"></div>
<div class="a" style="left:383.0px;top:499.5px;width:142.0px;height:10.5px;background:linear-gradient(90deg,#e4e4e4,#dedede 45%,#e8e8e8);filter:blur(0.3px)"></div>
<div class="a" style="left:656px;top:323.25px;width:60px;height:11px;background:#5c5fc8;border-radius:4.8px;"></div>
<div class="t" style="left:663.50px;top:325px;font-size:7.4px;color:#fff;transform:scaleX(1.0238);transform-origin:0 0;">Teams owner</div>
<div class="a" style="left:875.8px;top:323.25px;width:43.2px;height:11px;background:#0b8ce8;border-radius:4.8px;"></div>
<div class="t" style="left:882.65px;top:325px;font-size:7.4px;color:#fff;transform:scaleX(0.9968);transform-origin:0 0;">Licensed</div>
<div class="a" style="left:976.3px;top:323.25px;width:38.5px;height:11px;background:#fff;border-radius:4.8px;border:1px solid #8a8a8a;"></div>
<div class="t" style="left:983.30px;top:325px;font-size:7.4px;color:#3a3a3a;transform:scaleX(1.0275);transform-origin:0 0;">Billable</div>
<svg style="left:1143.0px;top:324.25px" width="11" height="9" viewBox="0 0 11 9"><path d="M0.8 4.6 L3.9 7.6 L10.3 1" fill="none" stroke="#1f9d78" stroke-width="1.7"/></svg>
<svg style="left:1246.5px;top:324.25px" width="11" height="9" viewBox="0 0 11 9"><path d="M0.8 4.6 L3.9 7.6 L10.3 1" fill="none" stroke="#1f9d78" stroke-width="1.7"/></svg>
<svg style="left:1354.5px;top:324.25px" width="11" height="9" viewBox="0 0 11 9"><path d="M0.8 4.6 L3.9 7.6 L10.3 1" fill="none" stroke="#1f9d78" stroke-width="1.7"/></svg>
<svg style="left:1453.5px;top:324.25px" width="11" height="9" viewBox="0 0 11 9"><path d="M0.8 4.6 L3.9 7.6 L10.3 1" fill="none" stroke="#1f9d78" stroke-width="1.7"/></svg>
<svg style="left:1565.0px;top:324.25px" width="9" height="9" viewBox="0 0 9 9"><circle cx="4.5" cy="4.5" r="4.3" fill="#b4b4b4"/><rect x="2" y="3.9" width="5" height="1.3" fill="#fff"/></svg>
<div class="a" style="left:656px;top:342.75px;width:60px;height:11px;background:#5c5fc8;border-radius:4.8px;"></div>
<div class="t" style="left:663.50px;top:345px;font-size:7.4px;color:#fff;transform:scaleX(1.0238);transform-origin:0 0;">Teams owner</div>
<div class="a" style="left:875.8px;top:342.75px;width:43.2px;height:11px;background:#0b8ce8;border-radius:4.8px;"></div>
<div class="t" style="left:882.65px;top:345px;font-size:7.4px;color:#fff;transform:scaleX(0.9968);transform-origin:0 0;">Licensed</div>
<div class="a" style="left:976.3px;top:342.75px;width:38.5px;height:11px;background:#fff;border-radius:4.8px;border:1px solid #8a8a8a;"></div>
<div class="t" style="left:983.30px;top:345px;font-size:7.4px;color:#3a3a3a;transform:scaleX(1.0275);transform-origin:0 0;">Billable</div>
<svg style="left:1143.0px;top:343.75px" width="11" height="9" viewBox="0 0 11 9"><path d="M0.8 4.6 L3.9 7.6 L10.3 1" fill="none" stroke="#1f9d78" stroke-width="1.7"/></svg>
<svg style="left:1246.5px;top:343.75px" width="11" height="9" viewBox="0 0 11 9"><path d="M0.8 4.6 L3.9 7.6 L10.3 1" fill="none" stroke="#1f9d78" stroke-width="1.7"/></svg>
<svg style="left:1354.5px;top:343.75px" width="11" height="9" viewBox="0 0 11 9"><path d="M0.8 4.6 L3.9 7.6 L10.3 1" fill="none" stroke="#1f9d78" stroke-width="1.7"/></svg>
<svg style="left:1453.5px;top:343.75px" width="11" height="9" viewBox="0 0 11 9"><path d="M0.8 4.6 L3.9 7.6 L10.3 1" fill="none" stroke="#1f9d78" stroke-width="1.7"/></svg>
<svg style="left:1565.0px;top:343.75px" width="9" height="9" viewBox="0 0 9 9"><circle cx="4.5" cy="4.5" r="4.3" fill="#b4b4b4"/><rect x="2" y="3.9" width="5" height="1.3" fill="#fff"/></svg>
<div class="a" style="left:656px;top:362.25px;width:60px;height:11px;background:#5c5fc8;border-radius:4.8px;"></div>
<div class="t" style="left:663.50px;top:364px;font-size:7.4px;color:#fff;transform:scaleX(1.0238);transform-origin:0 0;">Teams owner</div>
<div class="a" style="left:875.8px;top:362.25px;width:43.2px;height:11px;background:#0b8ce8;border-radius:4.8px;"></div>
<div class="t" style="left:882.65px;top:364px;font-size:7.4px;color:#fff;transform:scaleX(0.9968);transform-origin:0 0;">Licensed</div>
<div class="a" style="left:976.3px;top:362.25px;width:38.5px;height:11px;background:#fff;border-radius:4.8px;border:1px solid #8a8a8a;"></div>
<div class="t" style="left:983.30px;top:364px;font-size:7.4px;color:#3a3a3a;transform:scaleX(1.0275);transform-origin:0 0;">Billable</div>
<svg style="left:1143.0px;top:363.25px" width="11" height="9" viewBox="0 0 11 9"><path d="M0.8 4.6 L3.9 7.6 L10.3 1" fill="none" stroke="#1f9d78" stroke-width="1.7"/></svg>
<svg style="left:1246.5px;top:363.25px" width="11" height="9" viewBox="0 0 11 9"><path d="M0.8 4.6 L3.9 7.6 L10.3 1" fill="none" stroke="#1f9d78" stroke-width="1.7"/></svg>
<svg style="left:1453.5px;top:363.25px" width="11" height="9" viewBox="0 0 11 9"><path d="M0.8 4.6 L3.9 7.6 L10.3 1" fill="none" stroke="#1f9d78" stroke-width="1.7"/></svg>
<svg style="left:1565.0px;top:363.25px" width="9" height="9" viewBox="0 0 9 9"><circle cx="4.5" cy="4.5" r="4.3" fill="#b4b4b4"/><rect x="2" y="3.9" width="5" height="1.3" fill="#fff"/></svg>
<div class="a" style="left:875.8px;top:381.75px;width:51.2px;height:11px;background:#d9d9d9;border-radius:4.8px;"></div>
<div class="t" style="left:882.90px;top:384px;font-size:7.4px;color:#555;transform:scaleX(1.0115);transform-origin:0 0;">Unlicensed</div>
<div class="a" style="left:976.3px;top:381.75px;width:38.5px;height:11px;background:#fff;border-radius:4.8px;border:1px solid #8a8a8a;"></div>
<div class="t" style="left:983.30px;top:384px;font-size:7.4px;color:#3a3a3a;transform:scaleX(1.0275);transform-origin:0 0;">Billable</div>
<svg style="left:1143.0px;top:382.75px" width="11" height="9" viewBox="0 0 11 9"><path d="M0.8 4.6 L3.9 7.6 L10.3 1" fill="none" stroke="#1f9d78" stroke-width="1.7"/></svg>
<svg style="left:1246.5px;top:382.75px" width="11" height="9" viewBox="0 0 11 9"><path d="M0.8 4.6 L3.9 7.6 L10.3 1" fill="none" stroke="#1f9d78" stroke-width="1.7"/></svg>
<svg style="left:1535px;top:380.25px" width="12" height="12" viewBox="0 0 12 12"><circle cx="6" cy="6" r="5" fill="none" stroke="#e4e4e4" stroke-width="1.5"/><path d="M5 1.1 A5 5 0 0 1 7.5 10.8" fill="none" stroke="#3cc4b4" stroke-width="1.7"/></svg>
<div class="t" style="left:1550.50px;top:384px;font-size:8.2px;color:#333;transform:scaleX(1.0956);transform-origin:0 0;">Offboarding...</div>
<div class="a" style="left:875.8px;top:401.25px;width:51.2px;height:11px;background:#d9d9d9;border-radius:4.8px;"></div>
<div class="t" style="left:882.90px;top:403px;font-size:7.4px;color:#555;transform:scaleX(1.0115);transform-origin:0 0;">Unlicensed</div>
<div class="a" style="left:976.3px;top:401.25px;width:38.5px;height:11px;background:#fff;border-radius:4.8px;border:1px solid #8a8a8a;"></div>
<div class="t" style="left:983.30px;top:403px;font-size:7.4px;color:#3a3a3a;transform:scaleX(1.0275);transform-origin:0 0;">Billable</div>
<svg style="left:1143.0px;top:402.25px" width="11" height="9" viewBox="0 0 11 9"><path d="M0.8 4.6 L3.9 7.6 L10.3 1" fill="none" stroke="#1f9d78" stroke-width="1.7"/></svg>
<svg style="left:1246.5px;top:402.25px" width="11" height="9" viewBox="0 0 11 9"><path d="M0.8 4.6 L3.9 7.6 L10.3 1" fill="none" stroke="#1f9d78" stroke-width="1.7"/></svg>
<svg style="left:1535px;top:399.75px" width="12" height="12" viewBox="0 0 12 12"><circle cx="6" cy="6" r="5" fill="none" stroke="#e4e4e4" stroke-width="1.5"/><path d="M5 1.1 A5 5 0 0 1 7.5 10.8" fill="none" stroke="#3cc4b4" stroke-width="1.7"/></svg>
<div class="t" style="left:1550.50px;top:404px;font-size:8.2px;color:#333;transform:scaleX(1.0956);transform-origin:0 0;">Offboarding...</div>
<div class="a" style="left:656px;top:420.75px;width:40.7px;height:11px;background:#ececec;border-radius:4.8px;"></div>
<div class="t" style="left:663.60px;top:423px;font-size:7.4px;color:#555;transform:scaleX(1.0006);transform-origin:0 0;">Deleted</div>
<div class="a" style="left:875.8px;top:420.75px;width:51.2px;height:11px;background:#d9d9d9;border-radius:4.8px;"></div>
<div class="t" style="left:882.90px;top:423px;font-size:7.4px;color:#555;transform:scaleX(1.0115);transform-origin:0 0;">Unlicensed</div>
<div class="a" style="left:976.3px;top:420.75px;width:38.5px;height:11px;background:#fff;border-radius:4.8px;border:1px solid #8a8a8a;"></div>
<div class="t" style="left:983.30px;top:423px;font-size:7.4px;color:#3a3a3a;transform:scaleX(1.0275);transform-origin:0 0;">Billable</div>
<svg style="left:1143.0px;top:421.75px" width="11" height="9" viewBox="0 0 11 9"><path d="M0.8 4.6 L3.9 7.6 L10.3 1" fill="none" stroke="#1f9d78" stroke-width="1.7"/></svg>
<svg style="left:1246.5px;top:421.75px" width="11" height="9" viewBox="0 0 11 9"><path d="M0.8 4.6 L3.9 7.6 L10.3 1" fill="none" stroke="#1f9d78" stroke-width="1.7"/></svg>
<svg style="left:1535px;top:419.25px" width="12" height="12" viewBox="0 0 12 12"><circle cx="6" cy="6" r="5" fill="none" stroke="#e4e4e4" stroke-width="1.5"/><path d="M5 1.1 A5 5 0 0 1 7.5 10.8" fill="none" stroke="#3cc4b4" stroke-width="1.7"/></svg>
<div class="t" style="left:1550.50px;top:423px;font-size:8.2px;color:#333;transform:scaleX(1.0956);transform-origin:0 0;">Offboarding...</div>
<div class="a" style="left:656px;top:440.5px;width:40.7px;height:11px;background:#ececec;border-radius:4.8px;"></div>
<div class="t" style="left:663.60px;top:443px;font-size:7.4px;color:#555;transform:scaleX(1.0006);transform-origin:0 0;">Deleted</div>
<div class="a" style="left:875.8px;top:440.5px;width:51.2px;height:11px;background:#d9d9d9;border-radius:4.8px;"></div>
<div class="t" style="left:882.90px;top:443px;font-size:7.4px;color:#555;transform:scaleX(1.0115);transform-origin:0 0;">Unlicensed</div>
<div class="a" style="left:976.3px;top:440.5px;width:38.5px;height:11px;background:#fff;border-radius:4.8px;border:1px solid #8a8a8a;"></div>
<div class="t" style="left:983.30px;top:443px;font-size:7.4px;color:#3a3a3a;transform:scaleX(1.0275);transform-origin:0 0;">Billable</div>
<svg style="left:1143.0px;top:441.5px" width="11" height="9" viewBox="0 0 11 9"><path d="M0.8 4.6 L3.9 7.6 L10.3 1" fill="none" stroke="#1f9d78" stroke-width="1.7"/></svg>
<svg style="left:1246.5px;top:441.5px" width="11" height="9" viewBox="0 0 11 9"><path d="M0.8 4.6 L3.9 7.6 L10.3 1" fill="none" stroke="#1f9d78" stroke-width="1.7"/></svg>
<svg style="left:1535px;top:439.0px" width="12" height="12" viewBox="0 0 12 12"><circle cx="6" cy="6" r="5" fill="none" stroke="#e4e4e4" stroke-width="1.5"/><path d="M5 1.1 A5 5 0 0 1 7.5 10.8" fill="none" stroke="#3cc4b4" stroke-width="1.7"/></svg>
<div class="t" style="left:1550.50px;top:443px;font-size:8.2px;color:#333;transform:scaleX(1.0956);transform-origin:0 0;">Offboarding...</div>
<div class="a" style="left:656px;top:460.25px;width:67px;height:11px;background:#e6e2a2;border-radius:4.8px;"></div>
<div class="t" style="left:663.50px;top:462px;font-size:7.4px;color:#555;transform:scaleX(1.0125);transform-origin:0 0;">Shared mailbox</div>
<div class="a" style="left:875.8px;top:460.25px;width:51.2px;height:11px;background:#d9d9d9;border-radius:4.8px;"></div>
<div class="t" style="left:882.90px;top:462px;font-size:7.4px;color:#555;transform:scaleX(1.0115);transform-origin:0 0;">Unlicensed</div>
<div class="a" style="left:976.3px;top:460.25px;width:38.5px;height:11px;background:#fff;border-radius:4.8px;border:1px solid #8a8a8a;"></div>
<div class="t" style="left:983.30px;top:462px;font-size:7.4px;color:#3a3a3a;transform:scaleX(1.0275);transform-origin:0 0;">Billable</div>
<svg style="left:1021.8px;top:460.65px" width="10.2" height="10.2" viewBox="0 0 10 10"><circle cx="5" cy="5" r="5" fill="#2a6db5"/><rect x="4.3" y="4" width="1.4" height="4" fill="#fff"/><circle cx="5" cy="2.6" r="0.8" fill="#fff"/></svg>
<svg style="left:1143.0px;top:461.25px" width="11" height="9" viewBox="0 0 11 9"><path d="M0.8 4.6 L3.9 7.6 L10.3 1" fill="none" stroke="#1f9d78" stroke-width="1.7"/></svg>
<svg style="left:1246.5px;top:461.25px" width="11" height="9" viewBox="0 0 11 9"><path d="M0.8 4.6 L3.9 7.6 L10.3 1" fill="none" stroke="#1f9d78" stroke-width="1.7"/></svg>
<svg style="left:1535px;top:458.75px" width="12" height="12" viewBox="0 0 12 12"><circle cx="6" cy="6" r="5" fill="none" stroke="#e4e4e4" stroke-width="1.5"/><path d="M5 1.1 A5 5 0 0 1 7.5 10.8" fill="none" stroke="#3cc4b4" stroke-width="1.7"/></svg>
<div class="t" style="left:1550.50px;top:463px;font-size:8.2px;color:#333;transform:scaleX(1.0956);transform-origin:0 0;">Offboarding...</div>
<div class="a" style="left:656px;top:479.75px;width:67px;height:11px;background:#e6e2a2;border-radius:4.8px;"></div>
<div class="t" style="left:663.50px;top:482px;font-size:7.4px;color:#555;transform:scaleX(1.0125);transform-origin:0 0;">Shared mailbox</div>
<div class="a" style="left:727px;top:479.75px;width:60px;height:11px;background:#5c5fc8;border-radius:4.8px;"></div>
<div class="t" style="left:734.50px;top:482px;font-size:7.4px;color:#fff;transform:scaleX(1.0238);transform-origin:0 0;">Teams owner</div>
<div class="a" style="left:875.8px;top:479.75px;width:43.2px;height:11px;background:#0b8ce8;border-radius:4.8px;"></div>
<div class="t" style="left:882.65px;top:482px;font-size:7.4px;color:#fff;transform:scaleX(0.9968);transform-origin:0 0;">Licensed</div>
<div class="a" style="left:976.3px;top:479.75px;width:38.5px;height:11px;background:#fff;border-radius:4.8px;border:1px solid #8a8a8a;"></div>
<div class="t" style="left:983.30px;top:482px;font-size:7.4px;color:#3a3a3a;transform:scaleX(1.0275);transform-origin:0 0;">Billable</div>
<svg style="left:1021.8px;top:480.15px" width="10.2" height="10.2" viewBox="0 0 10 10"><circle cx="5" cy="5" r="5" fill="#2a6db5"/><rect x="4.3" y="4" width="1.4" height="4" fill="#fff"/><circle cx="5" cy="2.6" r="0.8" fill="#fff"/></svg>
<svg style="left:1143.0px;top:480.75px" width="11" height="9" viewBox="0 0 11 9"><path d="M0.8 4.6 L3.9 7.6 L10.3 1" fill="none" stroke="#1f9d78" stroke-width="1.7"/></svg>
<svg style="left:1354.5px;top:480.75px" width="11" height="9" viewBox="0 0 11 9"><path d="M0.8 4.6 L3.9 7.6 L10.3 1" fill="none" stroke="#1f9d78" stroke-width="1.7"/></svg>
<svg style="left:1453.5px;top:480.75px" width="11" height="9" viewBox="0 0 11 9"><path d="M0.8 4.6 L3.9 7.6 L10.3 1" fill="none" stroke="#1f9d78" stroke-width="1.7"/></svg>
<svg style="left:1565.0px;top:480.75px" width="9" height="9" viewBox="0 0 9 9"><circle cx="4.5" cy="4.5" r="4.3" fill="#b4b4b4"/><rect x="2" y="3.9" width="5" height="1.3" fill="#fff"/></svg>
<div class="a" style="left:875.8px;top:500.05px;width:43.2px;height:11px;background:#0b8ce8;border-radius:4.8px;"></div>
<div class="t" style="left:882.65px;top:502px;font-size:7.4px;color:#fff;transform:scaleX(0.9968);transform-origin:0 0;">Licensed</div>
<div class="a" style="left:976.3px;top:500.05px;width:38.5px;height:11px;background:#fff;border-radius:4.8px;border:1px solid #8a8a8a;"></div>
<div class="t" style="left:983.30px;top:502px;font-size:7.4px;color:#3a3a3a;transform:scaleX(1.0275);transform-origin:0 0;">Billable</div>
<svg style="left:1143.0px;top:501.05px" width="11" height="9" viewBox="0 0 11 9"><path d="M0.8 4.6 L3.9 7.6 L10.3 1" fill="none" stroke="#1f9d78" stroke-width="1.7"/></svg>
<svg style="left:1246.5px;top:501.05px" width="11" height="9" viewBox="0 0 11 9"><path d="M0.8 4.6 L3.9 7.6 L10.3 1" fill="none" stroke="#1f9d78" stroke-width="1.7"/></svg>
<svg style="left:1565.5px;top:500.55px" width="9" height="10" viewBox="0 0 9 10"><path d="M0.5 2 H8.5 M3 2 V0.8 H6 V2" fill="none" stroke="#e8562b" stroke-width="0.9"/><path d="M1.3 2.5 L2 9.5 H7 L7.7 2.5Z" fill="#f27a4e"/><path d="M3.2 3.8V8.3M4.5 3.8V8.3M5.8 3.8V8.3" stroke="#fff" stroke-width="0.5"/></svg>
<svg style="left:258.5px;top:531.5px" width="5" height="7" viewBox="0 0 5 7"><path d="M4 0.5 L1 3.5 L4 6.5" fill="none" stroke="#bbb" stroke-width="0.9"/></svg>
<div class="t" style="left:279.80px;top:531px;font-size:8.6px;color:#222;font-weight:bold;">1</div>
<svg style="left:301px;top:531.5px" width="5" height="7" viewBox="0 0 5 7"><path d="M1 0.5 L4 3.5 L1 6.5" fill="none" stroke="#bbb" stroke-width="0.9"/></svg>
<div class="t" style="left:1548.90px;top:532px;font-size:8px;color:#444;transform:scaleX(1.0990);transform-origin:0 0;">1-10 of 10</div>
<div class="a" style="left:1595.2px;top:525px;width:38.3px;height:19.4px;background:#fff;border:1px solid #dedede;border-radius:2px"></div>
<div class="t" style="left:1602.60px;top:531px;font-size:9.2px;color:#333;transform:scaleX(1.0260);transform-origin:0 0;">50</div>
<svg style="left:1618.3px;top:533.5px" width="6" height="4" viewBox="0 0 6 4"><path d="M0.5 0.5 L3 3 L5.5 0.5" fill="none" stroke="#4d6680" stroke-width="1"/></svg>
<div class="a" style="left:1355.5px;top:35.5px;width:292px;height:51.5px;background:#e8f2ef;border-left:1px solid #7f9c92;border-bottom:1.5px solid #8c8c8c;border-top:1.5px solid #63cdaa;box-shadow:0 1px 2px rgba(0,0,0,0.15)"></div>
<svg style="left:1362.5px;top:44.2px" width="11" height="11" viewBox="0 0 11 11"><circle cx="5.5" cy="5.5" r="5.3" fill="#3aa957"/><path d="M3 5.6 L4.9 7.3 L8 4" fill="none" stroke="#fff" stroke-width="1.2"/></svg>
<div class="t" style="left:1380.80px;top:46px;font-size:8.6px;color:#474747;transform:scaleX(1.1208);transform-origin:0 0;"><b>Success. 5 users</b> have been queued for offboarding from</div>
<div class="t" style="left:1380.80px;top:57px;font-size:8.6px;color:#474747;transform:scaleX(1.1129);transform-origin:0 0;"><b>Exchange</b> and <b>OneDrive</b>. The process will complete after</div>
<div class="t" style="left:1380.80px;top:69px;font-size:8.6px;color:#474747;transform:scaleX(1.1034);transform-origin:0 0;">the next backups of Exchange and OneDrive</div>
<svg style="left:1632px;top:44.5px" width="11" height="11" viewBox="0 0 11 11"><circle cx="5.5" cy="5.5" r="4.6" fill="none" stroke="#4d9fd4" stroke-width="1"/><path d="M3.7 3.7 L7.3 7.3 M7.3 3.7 L3.7 7.3" stroke="#4d9fd4" stroke-width="1"/></svg>
<div class="a" style="left:1545px;top:136px;width:91px;height:33px;border:3px solid #c23ff5"></div>
<div class="a" style="left:1531px;top:374px;width:90px;height:108.8px;border:3px solid #c23ff5"></div>
<svg style="left:986px;top:491px" width="18" height="25" viewBox="0 0 18 25"><path d="M0.8 0.8 L0.8 20.5 L5.3 16.2 L8.9 23.6 L12.1 22.1 L8.6 14.9 L14.9 14.9 Z" fill="#fff" stroke="#1a1a1a" stroke-width="1.1" stroke-linejoin="round"/></svg>
<div class="a" style="left:0px;top:0px;width:1648px;height:561px;border:1px solid #707070;border-bottom-color:#555;z-index:60;pointer-events:none"></div></body></html>
